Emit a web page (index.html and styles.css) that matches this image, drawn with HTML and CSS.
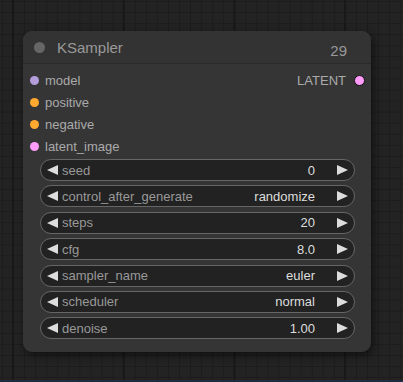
FILE: index.html
```html
<!DOCTYPE html>
<html lang="en">
<head>
    <meta charset="UTF-8">
    <title>KSampler</title>
    <link rel="stylesheet" href="styles.css">
</head>
<body>
<div class="canvas">
    <div class="node">
        <div class="node-title">
            <span class="title-dot"></span>
            <span class="title-text">KSampler</span>
            <span class="node-id">29</span>
        </div>
        <div class="slots">
            <div class="slot-row">
                <div class="slot"><span class="dot model"></span>model</div>
                <div class="slot out">LATENT<span class="dot latent linked"></span></div>
            </div>
            <div class="slot-row">
                <div class="slot"><span class="dot cond"></span>positive</div>
            </div>
            <div class="slot-row">
                <div class="slot"><span class="dot cond"></span>negative</div>
            </div>
            <div class="slot-row">
                <div class="slot"><span class="dot latent"></span>latent_image</div>
            </div>
        </div>
        <div class="widgets">
            <div class="widget"><span class="arrow left"></span><span class="w-label">seed</span><span class="w-value">0</span><span class="arrow right"></span></div>
            <div class="widget"><span class="arrow left"></span><span class="w-label">control_after_generate</span><span class="w-value">randomize</span><span class="arrow right"></span></div>
            <div class="widget"><span class="arrow left"></span><span class="w-label">steps</span><span class="w-value">20</span><span class="arrow right"></span></div>
            <div class="widget"><span class="arrow left"></span><span class="w-label">cfg</span><span class="w-value">8.0</span><span class="arrow right"></span></div>
            <div class="widget"><span class="arrow left"></span><span class="w-label">sampler_name</span><span class="w-value">euler</span><span class="arrow right"></span></div>
            <div class="widget"><span class="arrow left"></span><span class="w-label">scheduler</span><span class="w-value">normal</span><span class="arrow right"></span></div>
            <div class="widget"><span class="arrow left"></span><span class="w-label">denoise</span><span class="w-value">1.00</span><span class="arrow right"></span></div>
        </div>
    </div>
</div>
</body>
</html>
```

FILE: styles.css
```css
*{
    margin: 0;
    padding: 0;
    box-sizing: border-box;
}
body{
    background: #232323;
    font-family: "Liberation Sans", Arial, sans-serif;
    overflow: hidden;
}
.canvas{
    height: 382px;
    padding: 31px 0 0 23px;
    border-bottom: 2px solid #1f2b3f;
    background-color: #232323;
    background-image:
        linear-gradient(90deg, #181818 2px, transparent 2px),
        linear-gradient(90deg, #1c1c1c 1px, transparent 1px),
        linear-gradient(#1c1c1c 1px, transparent 1px);
    background-size: 110.7px 110.7px, 11.07px 11.07px, 11.07px 11.07px;
    background-position: 12px 0, 2px 0, 0 1px;
}
.node{
    width: 348px;
    height: 321px;
    background: #353535;
    border-radius: 9px;
    box-shadow: 2px 3px 8px rgba(0,0,0,.55);
    overflow: hidden;
}
.node-title{
    height: 33px;
    background: #333;
    border-bottom: 1px solid #2a2a2a;
    display: flex;
    align-items: center;
    padding: 0 24px 0 11px;
}
.title-dot{
    width: 11px;
    height: 11px;
    border-radius: 50%;
    background: #666;
    margin-right: 12px;
}
.title-text{
    flex: 1;
    font-size: 15px;
    color: #999;
}
.node-id{
    font-size: 15px;
    color: #999;
    padding-top: 6px;
}
.slots{
    padding-top: 5px;
}
.slot-row{
    height: 22px;
    display: flex;
    justify-content: space-between;
    align-items: center;
}
.slot{
    display: flex;
    align-items: center;
    font-size: 13px;
    color: #aaa;
    padding-left: 7px;
}
.slot .dot{
    margin-right: 6px;
}
.slot.out{
    padding: 0 6px 0 0;
}
.slot.out .dot{
    margin: 0 0 0 8px;
}
.dot{
    width: 9px;
    height: 9px;
    border-radius: 50%;
}
.dot.model{
    background: #b39ddb;
}
.dot.cond{
    background: #ffa931;
}
.dot.latent{
    background: #ff9cf9;
}
.dot.linked{
    width: 11px;
    height: 11px;
    border: 1px solid #111;
}
.widgets{
    padding: 2px 16px 0 17px;
}
.widget{
    height: 22px;
    margin-bottom: 4.4px;
    background: #222;
    border: 1px solid #666;
    border-radius: 11px;
    display: flex;
    align-items: center;
    padding: 0 6px;
    font-size: 13px;
}
.arrow{
    width: 0;
    height: 0;
    border-top: 5.5px solid transparent;
    border-bottom: 5.5px solid transparent;
}
.arrow.left{
    border-right: 11px solid #ddd;
    margin-right: 4px;
}
.arrow.right{
    border-left: 11px solid #ddd;
    margin-left: 22px;
}
.w-label{
    flex: 1;
    color: #999;
}
.w-value{
    color: #ddd;
}
```
